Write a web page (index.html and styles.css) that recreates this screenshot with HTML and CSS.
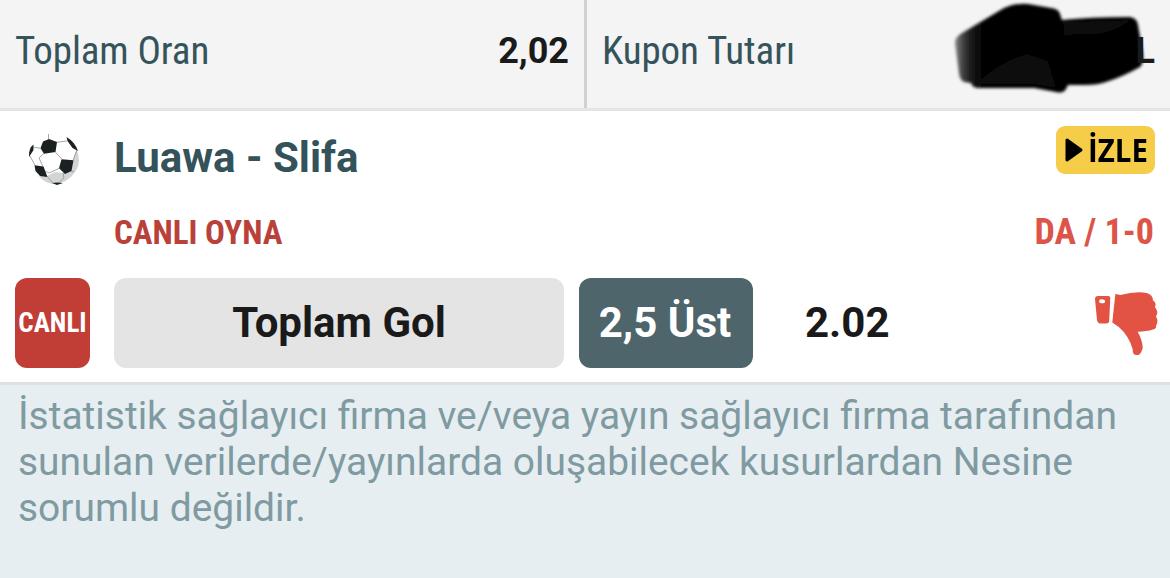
FILE: index.html
```
<!DOCTYPE html>
<html lang="en">
<head>
  <meta charset="UTF-8">
  <title>Kupon Detayı</title>
  <link rel="stylesheet" href="styles.css">
</head>
<body>
  <header class="summary">
    <div class="summary-cell">
      <span class="summary-label">Toplam Oran</span>
      <span class="summary-value">2,02</span>
    </div>
    <div class="summary-cell">
      <span class="summary-label">Kupon Tutarı</span>
      <span class="summary-value amount">L</span>
      <svg class="scribble" width="230" height="108" viewBox="0 0 230 108">
        <defs>
          <filter id="soft" x="-10%" y="-10%" width="120%" height="120%">
            <feGaussianBlur stdDeviation="1.5"/>
          </filter>
          <linearGradient id="fade">
            <stop offset="0" stop-color="#888"/>
            <stop offset="0.04" stop-color="#444"/>
            <stop offset="0.09" stop-color="#161616"/>
            <stop offset="0.16" stop-color="#000"/>
          </linearGradient>
        </defs>
        <g filter="url(#soft)">
          <path fill="url(#fade)" d="M15 43Q15 37 22 33L64 8Q75 3 88 4L111 8Q119 9 120 14L122 20Q150 17 190 17Q197 18 198 25L202 48Q205 62 200 67Q182 77 166 82Q158 85 145 85H128L126 89Q123 94 116 92L94 88H37Q32 87 31 83L24 82Q20 80 19 74Z"/>
          <path fill="#090909" d="M36 84Q62 60 87 54L108 61L116 88L92 84ZM123 22L190 20Q180 30 158 34L124 35Z"/>
        </g>
      </svg>
    </div>
  </header>

  <main class="bet">
    <div class="match-row">
      <svg class="ball" width="52" height="53" viewBox="0 0 52 53">
        <path fill="#fff" d="M3 16Q8 8 17 7L40 6Q51 15 51 27Q50 50 28 51Q7 50 2 29Z"/>
        <path fill="#d3d4d6" d="M48.500 16Q54 30 47 39Q39 51 26 51Q16 50 11 43H19L27 39L35 40L44 36L45 27Z"/>
        <path fill="#1b2022" d="M15 8.500L21 6L29 9L27.500 19L16 20.800L12.500 15.300ZM33.500 26.300L45.500 27.300L43.500 38L37 41L31 35.300ZM6.500 32.300L15.500 33.500L19.500 44L12 43L7.500 38ZM38.500 4Q47 9 50 18L44.500 15L39.500 8ZM1 24Q.5 15 5.500 11.500L5.500 17ZM24 50L29 49.500L35 50L29 52Z"/>
        <path fill="none" stroke="#8b8f90" stroke-width="0.8" d="M20.500 6V1M29 9.300L39 8M27 18.700L34 26.300M16 20.300L11 25M12.500 15.300L5 14M2 23L7 32.500M15 33.700L11 25M17 38L21 40L31.300 35.300M45 27.500L49 17M19.300 43.700L25 50M35 40L36 45L31 49.500M43 38L46 39"/>
      </svg>
      <h1 class="match-name">Luawa - Slifa</h1>
      <button class="watch">
        <svg width="20" height="26" viewBox="0 0 20 26">
          <path d="M3 3L17 13L3 23Z" stroke="#000" stroke-width="3" stroke-linejoin="round"/>
        </svg>
        <span class="watch-text">İZLE</span>
      </button>
    </div>

    <div class="status-row">
      <span class="live-play">CANLI OYNA</span>
      <span class="score">DA / 1-0</span>
    </div>

    <div class="market-row">
      <span class="live-badge">CANLI</span>
      <span class="market">Toplam Gol</span>
      <span class="pick">2,5 Üst</span>
      <span class="odds">2.02</span>
      <svg class="lost" width="65" height="65" viewBox="0 0 64 64" fill="#e35344">
        <path fill-rule="evenodd" d="M4 5H14Q16 5 16 7L15 29Q15 32 12 32H6Q4 32 3 29L1 8Q1 5 4 5ZM7 8Q5 8 5 10Q5 12 8 12Q11 12 11 10Q11 8 7 8Z"/>
        <path d="M21 3L26 4Q41 0 52 2Q58 4 58 9Q62 12 60 16Q64 20 61 25Q64 30 61 34Q62 37 58 38Q52 40 43 40Q48 49 48 56Q46 63 43 63Q38 64 38 57Q34 44 25 36L18 31Z"/>
      </svg>
    </div>
  </main>

  <footer class="notice">
    İstatistik sağlayıcı firma ve/veya yayın sağlayıcı firma tarafından<br>
    sunulan verilerde/yayınlarda oluşabilecek kusurlardan Nesine<br>
    sorumlu değildir.
  </footer>
</body>
</html>
```

FILE: styles.css
```
* {
  box-sizing: border-box;
}

body {
  margin: 0;
  height: 578px;
  display: flex;
  flex-direction: column;
  overflow: hidden;
  background-color: #e6eef1;
  font-family: Roboto, "Liberation Sans", sans-serif;
  color: #1a1a1a;
  white-space: nowrap;
}

/* top totals */
.summary {
  display: grid;
  grid-template-columns: 587px 1fr;
  height: 111px;
  background-color: #f4f4f4;
  border-bottom: 3px solid #e4e4e4;
}

.summary-cell {
  position: relative;
  display: flex;
  justify-content: space-between;
  padding: 28px 15px 0;
  line-height: 46px;
}

.summary-cell:first-child {
  border-right: 3px solid #d0d0d0;
}

.summary-label {
  font-size: 39px;
  font-stretch: 75%;
  letter-spacing: -0.1px;
  color: #35535a;
}

.summary-value {
  font-size: 36px;
  font-weight: 700;
}

.amount {
  z-index: 1;
}

.scribble {
  position: absolute;
  top: 0;
  right: 0;
}

/* bet card */
.bet {
  height: 274px;
  padding: 15px 15px 0;
  background-color: #fff;
  border-bottom: 3px solid #dbe1e4;
}

.match-row {
  display: flex;
  align-items: flex-start;
  height: 81px;
}

.ball {
  margin: 7px 34px 0 13px;
}

.match-name {
  margin: 7px auto 0 0;
  font-size: 42px;
  line-height: 49px;
  font-weight: 700;
  color: #33525a;
}

.watch {
  display: flex;
  align-items: center;
  gap: 4px;
  width: 99px;
  height: 48px;
  padding: 0 0 0 8px;
  border: none;
  border-radius: 9px;
  background-color: #f6cd48;
}

.watch-text {
  margin-top: -2px;
  font-family: "Open Sans", sans-serif;
  font-size: 32px;
  font-weight: 700;
  transform: scaleX(0.92);
  transform-origin: left;
}

.status-row {
  display: flex;
  justify-content: space-between;
  height: 71px;
  padding: 6px 1px 0 99px;
  line-height: 40px;
  font-weight: 700;
  font-stretch: 75%;
}

.live-play {
  font-size: 33px;
  color: #b9413a;
}

.score {
  font-size: 36px;
  line-height: 39px;
  color: #dd5548;
}

.market-row {
  display: flex;
  height: 90px;
  font-size: 42px;
  line-height: 90px;
  font-weight: 700;
  text-align: center;
}

.live-badge {
  width: 75px;
  margin-right: 24px;
  border-radius: 12px;
  background-color: #c13e37;
  color: #fff;
  font-size: 27px;
  line-height: 91px;
  font-stretch: 75%;
}

.market {
  width: 450px;
  margin-right: 15px;
  border-radius: 12px;
  background-color: #e4e4e4;
}

.pick {
  width: 174px;
  padding-right: 2px;
  border-radius: 12px;
  background-color: #4d656b;
  color: #fff;
}

.odds {
  margin-left: 52px;
}

.lost {
  margin: 13px -4px 0 auto;
}

.notice {
  padding: 8px 18px;
  font-size: 38.95px;
  line-height: 46px;
  color: #7f9aa1;
}
```
